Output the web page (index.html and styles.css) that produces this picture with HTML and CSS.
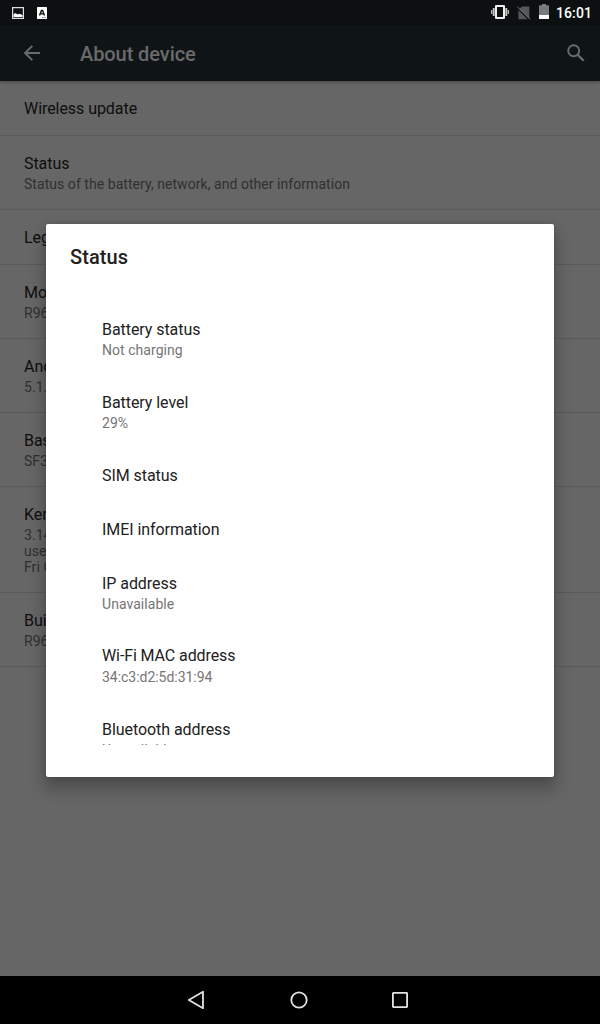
FILE: index.html
```html
<!DOCTYPE html>
<html lang="en">
<head>
<meta charset="utf-8">
<title>About device</title>
<link rel="stylesheet" href="styles.css">
</head>
<body>
<div class="screen">
  <header class="statusbar">
    <svg class="note-image" width="12" height="12" viewBox="0 0 12 12"><path d="M.6.6h10.800v10.800H.6z" fill="none" stroke="#ddd" stroke-width="1.200"/><path d="M1.500 10V7.200L3.500 6l2 1.500L7.200 6.800l3.300 1.200V10z" fill="#fff"/></svg>
    <svg class="note-a" width="10" height="12" viewBox="0 0 10 12"><rect width="10" height="12" rx=".6" fill="#fff"/><path d="M2.700 8.600V8L4.500 3.500h1L7.300 8v.6M3.400 6.900h3.200" fill="none" stroke="#111" stroke-width="1.400"/><path d="M5 10.500h4" stroke="#555" stroke-width=".8" stroke-dasharray="1 .6"/></svg>
    <span class="spacer"></span>
    <svg class="vibrate" width="18" height="14" viewBox="0 0 18 14"><path d="M5 1h8v12H5z" fill="none" stroke="#eee" stroke-width="2" stroke-linejoin="round"/><path d="M.7 5v4M17.300 5v4" stroke="#bbb" stroke-width="1.300"/><path d="M2.700 3v8M15.300 3v8" stroke="#ccc" stroke-width="1.800"/></svg>
    <svg class="nosim" width="14" height="14" viewBox="0 0 14 14"><path d="M5 .5h6.500q.8 0 .8.800v11.200q0 .8-.8.800H2.200q-.8 0-.8-.8V4z" fill="#555859"/><path d="M0 1.700L12 13.700" stroke="#0c1011" stroke-width="1.400"/><path d="M.3.700L13.300 13.400" stroke="#777" stroke-width="1"/></svg>
    <svg class="battery" width="10" height="15" viewBox="0 0 10 15"><path d="M3 0h4v1.300h2.500q.5 0 .5.500V11H0V1.800q0-.5.5-.5H3z" fill="#777a7a"/><path d="M0 11h10v3.500q0 .5-.5.500h-9q-.5 0-.5-.5z" fill="#fff"/></svg>
    <time class="clock">16:01</time>
  </header>
  <nav class="appbar">
    <svg class="back" width="16" height="16" viewBox="0 0 16 16"><path d="M16 8H1.500M8.300.8L1.100 8l7.200 7.200" fill="none" stroke="#6a6d6e" stroke-width="1.900"/></svg>
    <h1 class="heading">About device</h1>
    <svg class="search" width="18" height="18" viewBox="0 0 18 18"><circle cx="6.700" cy="6.700" r="5.500" fill="none" stroke="#6a6d6e" stroke-width="1.900"/><path d="M10.700 10.700l6 6" stroke="#6a6d6e" stroke-width="2.300"/></svg>
  </nav>
  <main class="list">
    <section class="row"><div class="title">Wireless update</div></section>
    <section class="row"><div class="title">Status</div><div class="sub">Status of the battery, network, and other information</div></section>
    <section class="row"><div class="title">Legal information</div></section>
    <section class="row"><div class="title">Model number</div><div class="sub">R96</div></section>
    <section class="row"><div class="title">Android version</div><div class="sub">5.1.1</div></section>
    <section class="row"><div class="title">Baseband version</div><div class="sub">SF3</div></section>
    <section class="row"><div class="title">Kernel version</div><div class="sub">3.14<br>user<br>Fri Oct</div></section>
    <section class="row"><div class="title">Build number</div><div class="sub">R96</div></section>
  </main>
  <footer class="navbar">
    <svg width="18" height="20" viewBox="0 0 18 20"><path d="M16 1.800v16.400L1.800 10z" fill="none" stroke="#e2e2e2" stroke-width="1.800" stroke-linejoin="round"/></svg>
    <svg width="18" height="18" viewBox="0 0 18 18"><circle cx="9" cy="9" r="7.700" fill="none" stroke="#e2e2e2" stroke-width="1.800"/></svg>
    <svg width="16" height="16" viewBox="0 0 16 16"><rect x=".9" y=".9" width="14.200" height="14.200" rx=".5" fill="none" stroke="#e2e2e2" stroke-width="1.800"/></svg>
  </footer>
  <div class="dialog" role="dialog">
    <h2 class="dialog-title">Status</h2>
    <div class="dialog-list">
      <section class="item"><div class="title">Battery status</div><div class="sub">Not charging</div></section>
      <section class="item"><div class="title">Battery level</div><div class="sub">29%</div></section>
      <section class="item"><div class="title">SIM status</div></section>
      <section class="item"><div class="title">IMEI information</div></section>
      <section class="item"><div class="title">IP address</div><div class="sub">Unavailable</div></section>
      <section class="item item-tight"><div class="title">Wi-Fi MAC address</div><div class="sub">34:c3:d2:5d:31:94</div></section>
      <section class="item"><div class="title">Bluetooth address</div><div class="sub">Unavailable</div></section>
    </div>
  </div>
</div>
</body>
</html>
```
FILE: styles.css
```css
* { box-sizing: border-box; }
body { margin: 0; font-family: Roboto, "Liberation Sans", sans-serif; }
svg { display: block; flex: none; }
.screen { position: relative; display: flex; flex-direction: column; width: 600px; height: 1024px; overflow: hidden; background: #666; }
.statusbar { display: flex; align-items: center; height: 25px; padding: 0 8px 0 12px; background: #0c1011; flex: none; }
.note-a { margin-left: 13px; }
.spacer { flex: 1; }
.vibrate { margin-right: 8px; margin-top: -1px; }
.nosim { margin-right: 8px; }
.battery { margin-right: 7px; margin-top: -2px; }
.clock { margin-top: 2px; font-size: 14px; font-weight: 500; line-height: 25px; letter-spacing: .1px; color: #fff; width: 36px; white-space: nowrap; }
.appbar { display: flex; align-items: center; height: 56px; padding: 0 15px 0 24px; background: #0f1517; flex: none; box-shadow: 0 1px 3px rgba(0,0,0,.35); z-index: 1; }
.heading { margin: 2px 0 0 40px; flex: 1; font-size: 20px; font-weight: 500; line-height: 24px; letter-spacing: -.08px; color: #6a6a6a; }
.list { flex: 1; }
.row { padding: 17px 24px 15px; border-bottom: 1px solid #5a5a5a; }
.item { padding: 17px 32px 15px; }
.title { font-size: 16px; line-height: 22px; letter-spacing: -.06px; }
.sub { margin: 1px 0 2px; font-size: 14px; line-height: 16px; letter-spacing: .05px; }
.row .title { color: #0e0e0e; }
.row .sub { color: #303030; }
.item .title { color: #212121; }
.item .sub { color: #757575; }
.item-tight { padding-top: 16px; }
.item-tight .title { letter-spacing: -.1px; }
.item-tight .sub { margin-top: 2px; letter-spacing: -.03px; }
.navbar { display: flex; align-items: center; justify-content: center; gap: 84.500px; height: 48px; padding-right: 5px; background: #000; flex: none; }
.dialog { position: absolute; left: 46px; top: 224px; width: 508px; height: 553px; padding: 21px 24px 32px; display: flex; flex-direction: column; background: #fff; border-radius: 2px; box-shadow: 0 10px 16px 2px rgba(0,0,0,.25), 0 0 5px rgba(0,0,0,.12); }
.dialog-title { margin: 0 0 33px; font-size: 20px; font-weight: 500; line-height: 24px; letter-spacing: .1px; color: #212121; }
.dialog-list { flex: 1; min-height: 0; overflow: hidden; }
```
